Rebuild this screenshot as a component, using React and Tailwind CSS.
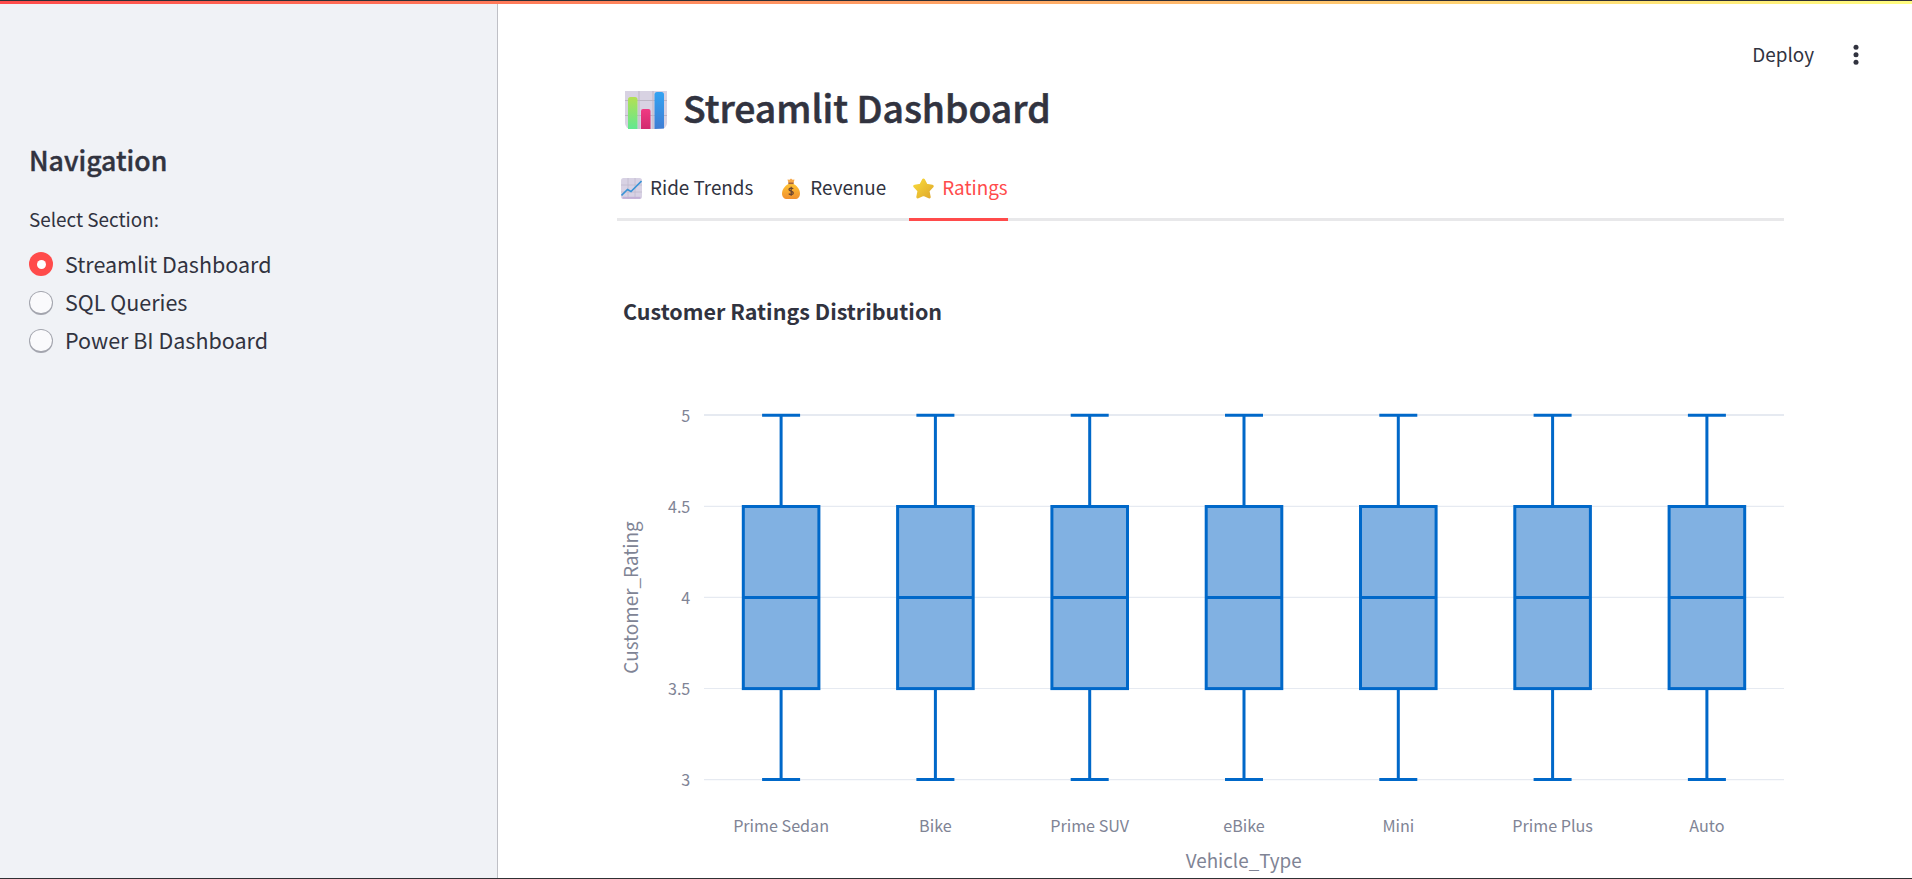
const categories = ["Prime Sedan", "Bike", "Prime SUV", "eBike", "Mini", "Prime Plus", "Auto"];
const ticks = ["5", "4.5", "4", "3.5", "3"];
const sections = ["Streamlit Dashboard", "SQL Queries", "Power BI Dashboard"];

function BarChartEmoji() {
  return (
    <svg width="42" height="38" viewBox="0 0 42 38" className="shrink-0">
      <defs>
        <linearGradient id="green" x1="0" y1="0" x2="0" y2="1"><stop offset="0" stopColor="#b4e052" /><stop offset="1" stopColor="#62e891" /></linearGradient>
        <linearGradient id="blue" x1="0" y1="0" x2="0" y2="1"><stop offset="0" stopColor="#33a3f2" /><stop offset="1" stopColor="#3f7dd4" /></linearGradient>
        <linearGradient id="pink" x1="0" y1="0" x2="0" y2="1"><stop offset="0" stopColor="#f03a83" /><stop offset="1" stopColor="#d22a6e" /></linearGradient>
      </defs>
      <path d="M0 0H42V32a6 6 0 0 1-6 6H6a6 6 0 0 1-6-6Z" fill="#d8d2e2" />
      <path d="M0 9.5H42M0 24.5H42M14 0V38M28 0V38" stroke="#bdb5c4" strokeWidth="1" fill="none" />
      <path d="M3 38V8.500q0-2.500 2.500-2.500h4.500q2.500 0 2.500 2.500V38Z" fill="url(#green)" />
      <path d="M16 38V20q0-2 2-2h5.500q2 0 2 2V38Z" fill="url(#pink)" />
      <path d="M29.500 38V3.500q0-2.500 2.500-2.500h4.500q2.500 0 2.500 2.500V37.500Z" fill="url(#blue)" />
    </svg>
  );
}

function TrendEmoji() {
  return (
    <svg width="21" height="21" viewBox="0 0 21 21" className="shrink-0">
      <rect width="21" height="21" rx="2.500" fill="#d8d2e4" />
      <path d="M0 7H21M0 14H21M7 0V21M14 0V21" stroke="#c2bacd" strokeWidth="0.800" />
      <path d="M1.500 19.800H19.500" stroke="#c3b0d6" strokeWidth="2" />
      <path d="M0.500 17.500 6.500 11.500l3.500 2L20.500 3" stroke="#3a94d6" strokeWidth="1.600" fill="none" />
    </svg>
  );
}

function MoneyBagEmoji() {
  return (
    <svg width="18" height="21" viewBox="0 0 18 21" className="shrink-0">
      <defs>
        <linearGradient id="bag" x1="0" y1="0" x2="0" y2="1"><stop offset="0" stopColor="#ffc233" /><stop offset="1" stopColor="#f0902e" /></linearGradient>
      </defs>
      <path d="M5.500 1.500 7.500 1.800 9 .5l1.500 1.300 2-.3-1 3.500h-5Z" fill="#f7a94a" />
      <path d="M6.500 6C2.500 8 0 12 0 15.500 0 19 2 21 5 21h8c3 0 5-2 5-5.500C18 12 15.500 8 11.500 6Z" fill="url(#bag)" />
      <path d="M6.300 4.500h5.400v1.600H6.300Z" fill="#a8643a" />
      <path d="M11.200 10.900C10.300 9.700 7 9.700 7 11.500s4.300 1.500 4.300 3.500-3.500 2-4.500.6M9.200 8.800v9" stroke="#6b4530" strokeWidth="1.300" fill="none" />
    </svg>
  );
}

function StarEmoji() {
  return (
    <svg width="21" height="21" viewBox="0 0 21 21" className="shrink-0">
      <defs>
        <linearGradient id="star" x1="0" y1="0" x2="1" y2="1"><stop offset="0" stopColor="#f8d93a" /><stop offset="1" stopColor="#e0a92c" /></linearGradient>
      </defs>
      <path d="M10.500 2 13.200 7.200 19.200 8.200 15 12.700 16.200 19 10.500 16.500 4.800 19 6 12.700 1.800 8.200 7.800 7.200Z" fill="url(#star)" stroke="url(#star)" strokeWidth="3" strokeLinejoin="round" />
    </svg>
  );
}

function Sidebar() {
  return (
    <aside className="flex w-[498px] shrink-0 flex-col border-r border-[#bfc0c6] bg-[#f0f2f6] pl-[29px] pt-[138px]">
      <h2 className="text-[26.700px] leading-[36px] font-medium [-webkit-text-stroke:0.4px_#31333f]">Navigation</h2>
      <p className="mt-[26px] text-[18.900px] leading-[30px]">Select Section:</p>
      <div className="mt-[11px] flex flex-col">
        {sections.map((label, i) => (
          <label key={label} className="flex h-[38.100px] items-center gap-[12px] text-[21.500px] leading-[38px]">
            {i === 0 ? (
              <span className="flex size-[24px] items-center justify-center rounded-full bg-[#ff4b4b]"><span className="size-[9px] rounded-full bg-white" /></span>
            ) : (
              <span className="mt-[1px] flex size-[24px] items-center justify-center rounded-full bg-[#a3a5ae]"><span className="size-[21.500px] rounded-full bg-[#fafafc]" /></span>
            )}
            <span>{label}</span>
          </label>
        ))}
      </div>
    </aside>
  );
}

function BoxPlot() {
  return (
    <svg width="1168" height="498" viewBox="617 380 1168 498" className="block" fill="#808495">
      {ticks.map((t, i) => (
        <g key={t}>
          <path d={`M704 ${i === 0 ? 415 : 415.2 + i * 91.1}H1784`} stroke="#e6eaf1" strokeWidth={i === 0 ? 2 : 1.2} />
          <text x="690.300" y={422 + i * 91.1} textAnchor="end" fontSize="16.100">{t}</text>
        </g>
      ))}
      {categories.map((c, i) => {
        const x = 781.1 + i * 154.3;
        return (
          <g key={c}>
            <g stroke="#0068c9" strokeWidth="3">
              <path d={`M${x} 415V506M${x} 688.700V779.600M${x - 19} 415.300h38M${x - 19} 779.600h38`} />
              <rect x={x - 37.8} y="506.500" width="75.600" height="182.100" fill="#81b1e2" />
              <path d={`M${x - 37.8} 597.500h75.600`} />
            </g>
            <text x={x} y="832" textAnchor="middle" fontSize="16.150">{c}</text>
          </g>
        );
      })}
      <text x="1243.700" y="868" textAnchor="middle" fontSize="18.850">Vehicle_Type</text>
      <text transform="translate(638 597.500) rotate(-90)" textAnchor="middle" fontSize="18.850">Customer_Rating</text>
    </svg>
  );
}

export default function App() {
  return (
    <div className="flex h-[879px] w-[1912px] flex-col overflow-hidden border-y border-[#303034] bg-white font-['Noto_Sans_CJK_SC',sans-serif] text-[#31333f]">
      <div className="h-[3px] shrink-0 bg-linear-to-r/srgb from-[#ff4b4b] to-[#fffd80]" />
      <div className="flex min-h-0 grow">
        <Sidebar />
        <main className="min-w-0 grow">
          <header className="flex h-[76px] items-center justify-end gap-[38px] pr-[52px] pt-[26px]">
            <span className="-mt-[2px] text-[18.900px] leading-[30px]">Deploy</span>
            <svg width="8" height="22" viewBox="0 0 8 22" fill="#31333f"><circle cx="4" cy="3.300" r="2.500" /><circle cx="4" cy="10.800" r="2.500" /><circle cx="4" cy="18.300" r="2.500" /></svg>
          </header>
          <div className="w-[1286px] pl-[119px]">
            <h1 className="flex h-[60px] items-center gap-[16px] pl-[8px] text-[37.300px] leading-[60px] font-medium [-webkit-text-stroke:0.6px_#31333f]"><BarChartEmoji /><span className="-mt-[7px]">Streamlit Dashboard</span></h1>
            <nav className="mt-[18px] flex h-[63px] border-b-[3px] border-[#e8e8ea] text-[18.850px] leading-[58px]">
              <span className="mr-[29px] flex items-center gap-[8px] pl-[4px]"><TrendEmoji /><span className="-mt-[2px]">Ride Trends</span></span>
              <span className="mr-[23px] flex items-center gap-[10px]"><MoneyBagEmoji /><span className="-mt-[2px]">Revenue</span></span>
              <span className="-mb-[3px] flex items-center gap-[8px] border-b-[3px] border-[#ff4b4b] pl-[4px] text-[#ff4b4b]"><StarEmoji /><span className="-mt-[2px]">Ratings</span></span>
            </nav>
            <h3 className="mt-[75px] mb-[54px] h-[30px] pl-[6px] text-[21.500px] leading-[30px] font-bold">Customer Ratings Distribution</h3>
            <BoxPlot />
          </div>
        </main>
      </div>
    </div>
  );
}
